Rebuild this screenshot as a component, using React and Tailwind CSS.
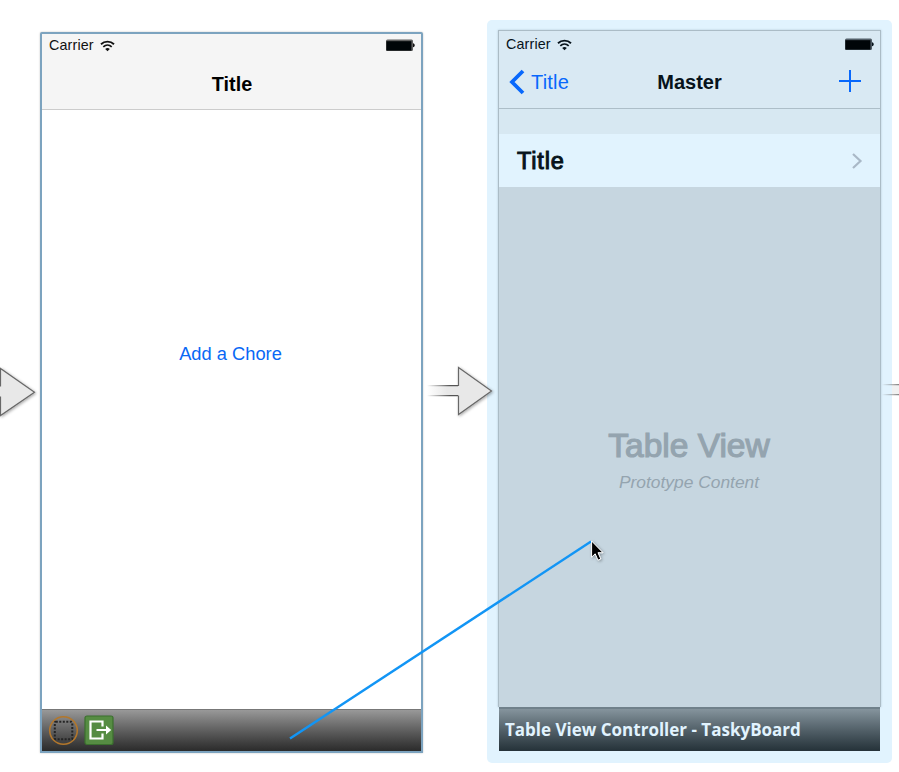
import React from "react";

function Wifi() {
  return (
    <svg className="ml-[6px] h-[12px] w-[15px] shrink-0" viewBox="0 0 15 12" fill="none" stroke="currentColor">
      <path d="M1 4.2C4.6 .7 10.4 .7 14 4.2" strokeWidth="1.9" />
      <path d="M3.3 6.8C5.7 4.5 9.3 4.5 11.7 6.8" strokeWidth="1.7" />
      <path d="M7.5 11.2L5.2 8.9C6.5 7.7 8.5 7.7 9.8 8.9Z" fill="currentColor" stroke="none" />
    </svg>
  );
}

function Battery() {
  return (
    <svg className="h-[13px] w-[31px]" viewBox="0 0 31 13">
      <rect x="1" y=".5" width="27" height="11.5" rx="1.5" fill="currentColor" opacity=".65" />
      <rect x="1.4" y="2.2" width="25" height="9.4" fill="#000508" />
      <path d="M28 4.2C30.3 4.8 30.3 7.7 28 8.3Z" fill="currentColor" />
    </svg>
  );
}

function StatusBar() {
  return (
    <div className="flex h-[23px] items-center justify-between pl-[7px] pr-[5px]">
      <div className="flex items-center">
        <span className="text-[14.3px] leading-[23px] tracking-[0.15px]">Carrier</span>
        <Wifi />
      </div>
      <Battery />
    </div>
  );
}

function FirstScene() {
  return (
    <section className="mt-[32px] ml-[40px] flex h-[721px] w-[383px] shrink-0 flex-col rounded-t-[2px] border-2 border-[#7ca3bf] bg-white shadow-[0_0_2px_rgba(0,0,0,0.25)]">
      <header className="h-[76px] shrink-0 border-b border-[#cccccc] bg-[#f5f5f5] text-[#111]">
        <StatusBar />
        <h1 className="mt-[14px] pl-px text-center text-[19.8px] leading-[26px] font-bold text-black">Title</h1>
      </header>
      <div className="flex flex-1 flex-col items-center pt-[231px] pr-[2px]">
        <button className="text-[18.3px] leading-[26px] whitespace-nowrap text-[#0868f5]">Add a Chore</button>
      </div>
      <footer className="flex h-[42px] shrink-0 items-center gap-[5px] border-t border-[#777] bg-linear-to-b from-[#999] to-[#2b2b2b] pl-[6px]">
        <svg className="h-[31px] w-[31px]" viewBox="0 0 31 31" fill="none">
          <circle cx="15.5" cy="15.5" r="13.8" stroke="#b3772b" strokeWidth="1.6" />
          <rect x="6.8" y="6.8" width="17.5" height="17.5" rx="1" stroke="#242424" strokeWidth="2" strokeDasharray="2 1.5" />
        </svg>
        <svg className="h-[31px] w-[30px]" viewBox="0 0 30 31" fill="none">
          <rect x="1" y="1" width="28" height="28.5" rx="2" fill="#568c43" stroke="#3b702e" strokeWidth="1.2" />
          <path d="M18.5 11.5V6.5H6.5V23.5H18.5V18.5" stroke="#fff" strokeWidth="2.2" />
          <path d="M12.5 15H23" stroke="#fff" strokeWidth="2" />
          <path d="M22 10.5L27.2 15L22 19.5Z" fill="#fff" />
        </svg>
      </footer>
    </section>
  );
}

function MasterScene() {
  return (
    <section className="mt-[20px] ml-[64px] flex h-[743px] w-[405px] shrink-0 flex-col rounded-[5px] bg-[#e1f3fe] px-[11px] pt-[10px]">
      <div className="flex h-[677px] shrink-0 flex-col border border-b-0 border-[#abbcc6] bg-[#c6d6e0] shadow-[0_0_2px_rgba(90,120,140,0.35)]">
        <header className="h-[78px] shrink-0 border-b border-[#adbec8] bg-[#d9e9f3] pt-[2px] text-[#07131b]">
          <StatusBar />
          <div className="mt-[13px] grid grid-cols-3 items-center">
            <div className="flex items-center pl-[10px] text-[#0868fc]">
              <svg className="h-[26px] w-[16px]" viewBox="0 0 16 26" fill="none">
                <path d="M14 2L3 13L14 24" stroke="currentColor" strokeWidth="3.8" />
              </svg>
              <span className="ml-[6px] text-[20px] leading-[26px] tracking-[0.2px]">Title</span>
            </div>
            <h2 className="text-center text-[20px] leading-[26px] font-bold">Master</h2>
            <svg className="mr-[19px] mb-[2px] h-[22px] w-[22px] justify-self-end" viewBox="0 0 22 22" fill="none">
              <path d="M0 11H22M11 0V22" stroke="#0868fc" strokeWidth="2" />
            </svg>
          </div>
        </header>
        <div className="h-[25px] shrink-0 bg-[#d7e8f2]" />
        <div className="flex h-[53px] shrink-0 items-center justify-between bg-[#e1f3fe] pr-[17px] pl-[18px]">
          <span className="text-[23.5px] leading-[30px] tracking-[0.8px] text-[#07131b] [-webkit-text-stroke:1px_#07131b]">Title</span>
          <svg className="h-[18px] w-[12px]" viewBox="0 0 12 18" fill="none">
            <path d="M2 2L9.5 9L2 16" stroke="#a9b8c7" strokeWidth="2.2" />
          </svg>
        </div>
        <div className="flex flex-1 flex-col items-center pt-[238px] pr-px text-[#94a4af]">
          <div className="text-[33.5px] leading-[42px] whitespace-nowrap [-webkit-text-stroke:1.2px_#94a4af]">Table View</div>
          <div className="mt-[3px] text-[17.4px] leading-[24px] whitespace-nowrap italic">Prototype Content</div>
        </div>
      </div>
      <footer className="mx-px flex h-[44px] shrink-0 items-center border-t-2 border-[#70818b] bg-linear-to-b from-[#85949d] to-[#253239] pl-[6px] font-['Open_Sans','Noto_Sans',sans-serif] text-[17px] font-bold whitespace-nowrap text-[#e1f3fe]">
        <span>Table View Controller - TaskyBoard</span>
      </footer>
    </section>
  );
}

function Connections() {
  return (
    <svg className="pointer-events-none absolute inset-0 h-[772px] w-[899px]" viewBox="0 0 899 772" fill="none">
      <defs>
        <filter id="shade" x="-20%" y="-20%" width="150%" height="150%">
          <feDropShadow dx="1" dy="1" stdDeviation="1.8" floodOpacity=".35" />
        </filter>
        <linearGradient id="fade" gradientUnits="userSpaceOnUse" x1="427" y1="0" x2="447" y2="0">
          <stop offset="0" stopColor="#e8e8e8" stopOpacity="0" />
          <stop offset="1" stopColor="#e8e8e8" />
        </linearGradient>
        <linearGradient id="edge" gradientUnits="userSpaceOnUse" x1="427" y1="0" x2="450" y2="0">
          <stop offset="0" stopColor="#555" stopOpacity="0" />
          <stop offset="1" stopColor="#555" />
        </linearGradient>
        <linearGradient id="tail" gradientUnits="userSpaceOnUse" x1="882" y1="0" x2="903" y2="0">
          <stop offset="0" stopColor="#666" stopOpacity="0" />
          <stop offset="1" stopColor="#666" />
        </linearGradient>
      </defs>
      <path d="M-10 386H.5V368.5L34.5 392.3L.5 415.5V397H-10Z" fill="#e8e8e8" stroke="#686868" strokeWidth="1.2" filter="url(#shade)" />
      <path d="M458.5 367.5L491.5 391L458.5 414.5Z" fill="#e8e8e8" stroke="#686868" strokeWidth="1.2" filter="url(#shade)" />
      <rect x="427" y="386" width="33" height="9.5" fill="url(#fade)" />
      <path d="M427 385h31v1.3h-31ZM427 395h31v1.3h-31Z" fill="url(#edge)" />
      <rect x="892" y="385" width="7" height="9" fill="#f1f1f1" />
      <path d="M882 384h17v1.2h-17ZM882 394h17v1.2h-17Z" fill="url(#tail)" />
      <path d="M290 738.5L591 541.5" stroke="#1295f5" strokeWidth="2.4" />
      <path d="M591.6 541V557.2L595.2 553.8L598 560.2L600.8 559L598 552.7H603Z" fill="#000" stroke="#fff" strokeWidth="1" filter="url(#shade)" />
    </svg>
  );
}

export default function App() {
  return (
    <main className="relative flex h-[772px] w-[899px] items-start overflow-hidden bg-white font-['Liberation_Sans',Arial,sans-serif]">
      <FirstScene />
      <MasterScene />
      <Connections />
    </main>
  );
}
